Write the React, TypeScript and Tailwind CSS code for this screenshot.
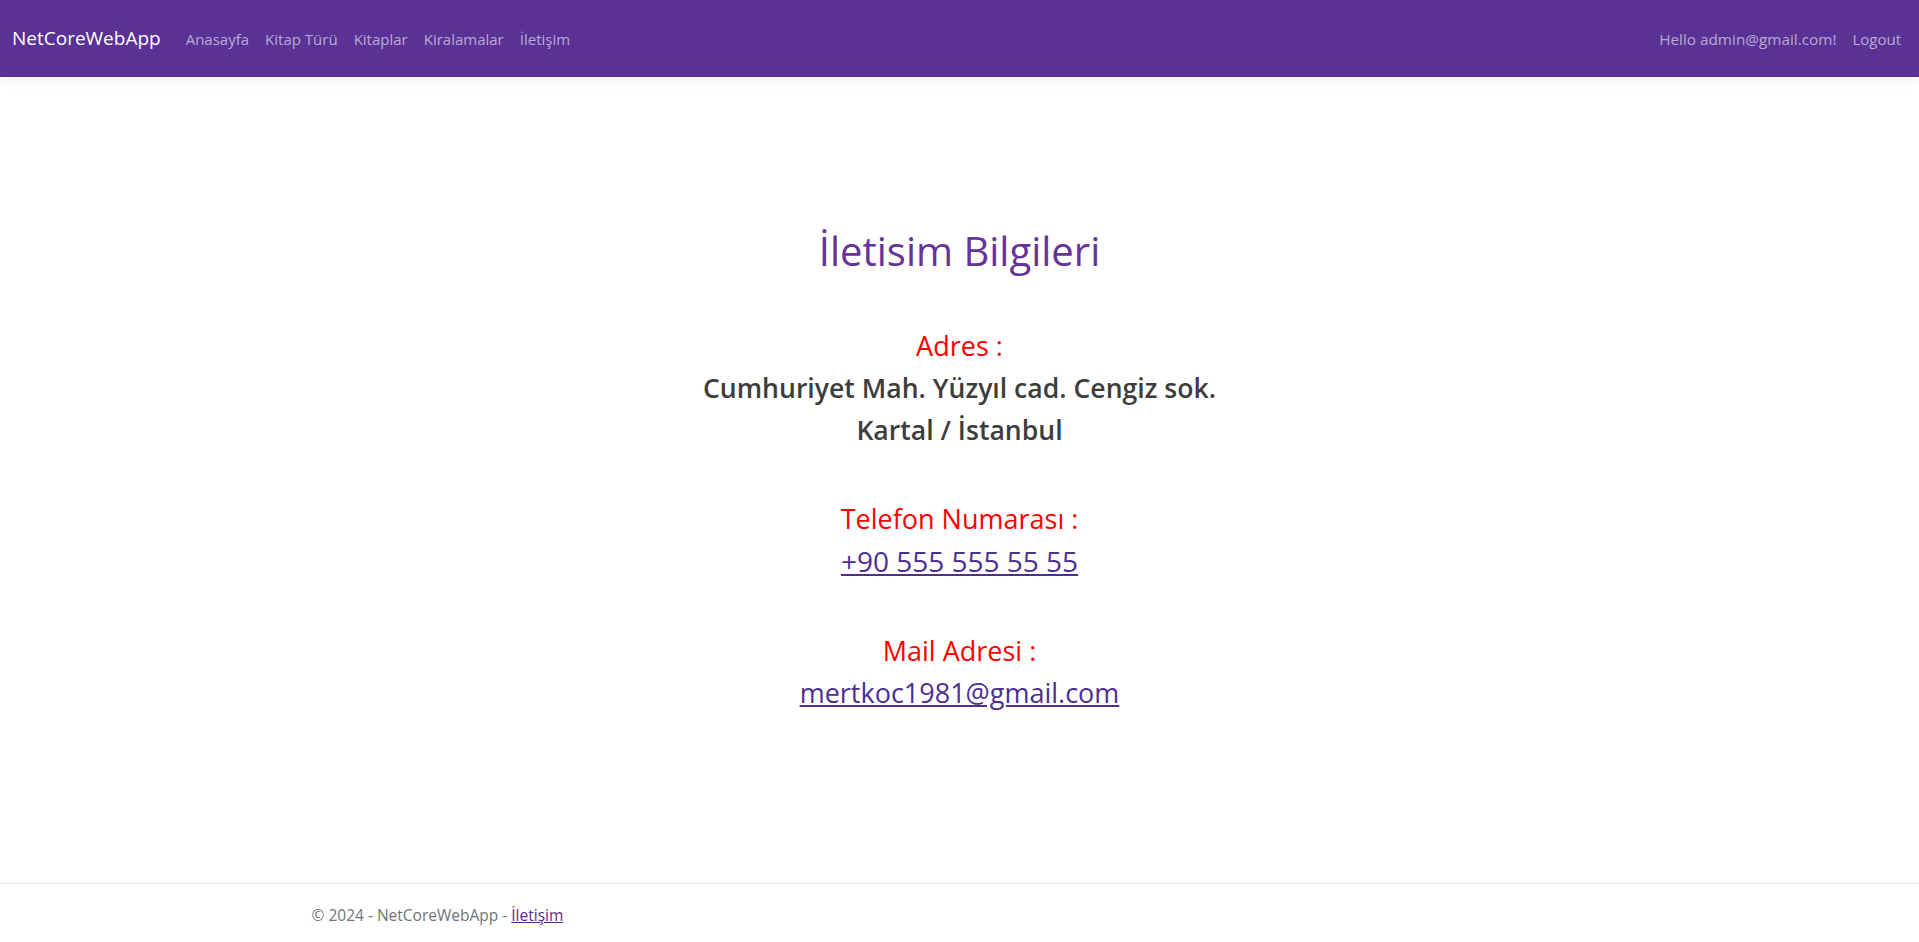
const navLinks = ["Anasayfa", "Kitap Türü", "Kitaplar", "Kiralamalar", "İletişim"];

const Navbar = () => {
  return (
    <nav className="flex h-[77px] items-center justify-between bg-[#5a3195] pl-3 pr-[10px] shadow-[0_0.25rem_0.75rem_rgba(0,0,0,0.05)]">
      <div className="flex items-center">
        <a className="mr-[17px] text-[19px] text-white">NetCoreWebApp</a>
        <ul className="flex items-center">
          {navLinks.map((link) => (
            <li key={link}>
              <a className="px-2 text-[15px] text-[#b9acd4]">{link}</a>
            </li>
          ))}
        </ul>
      </div>
      <ul className="flex items-center">
        <li>
          <a className="px-2 text-[15.3px] text-[#b9acd4]">Hello admin@gmail.com!</a>
        </li>
        <li>
          <a className="px-2 text-[15px] text-[#b9acd4]">Logout</a>
        </li>
      </ul>
    </nav>
  );
};

const ContactSection = ({ label, children }) => {
  return (
    <div className="mt-[47px] text-[27px] leading-[42px]">
      <div className="text-[#ff0000]">{label}</div>
      {children}
    </div>
  );
};

export default function App() {
  return (
    <div className="flex min-h-screen flex-col bg-white font-['Open_Sans',sans-serif]">
      <Navbar />

      <main className="flex-1 pt-[151px] text-center">
        <h1 className="text-[40px] font-medium leading-[46px] text-[#663399]">İletisim Bilgileri</h1>

        <div className="mt-[51px] text-[27px] leading-[42px]">
          <div className="text-[#ff0000]">Adres :</div>
          <div className="text-[26.6px] font-semibold text-[#3d3d3d]">Cumhuriyet Mah. Yüzyıl cad. Cengiz sok.</div>
          <div className="text-[26.6px] font-semibold text-[#3d3d3d]">Kartal / İstanbul</div>
        </div>

        <ContactSection label="Telefon Numarası :">
          <a className="text-[28px] font-medium text-[#4c2f93] underline">+90 555 555 55 55</a>
        </ContactSection>

        <ContactSection label="Mail Adresi :">
          <a className="font-medium text-[#4c2f93] underline">mertkoc1981@gmail.com</a>
        </ContactSection>
      </main>

      <footer className="h-[59px] border-t border-[#e5e5e5] text-[15.5px] leading-[62px] text-[#6c757d]">
        <div className="mx-auto max-w-[1320px] px-3">
          © 2024 - NetCoreWebApp - <a className="text-[#5b2a8f] underline">İletişim</a>
        </div>
      </footer>
    </div>
  );
}
